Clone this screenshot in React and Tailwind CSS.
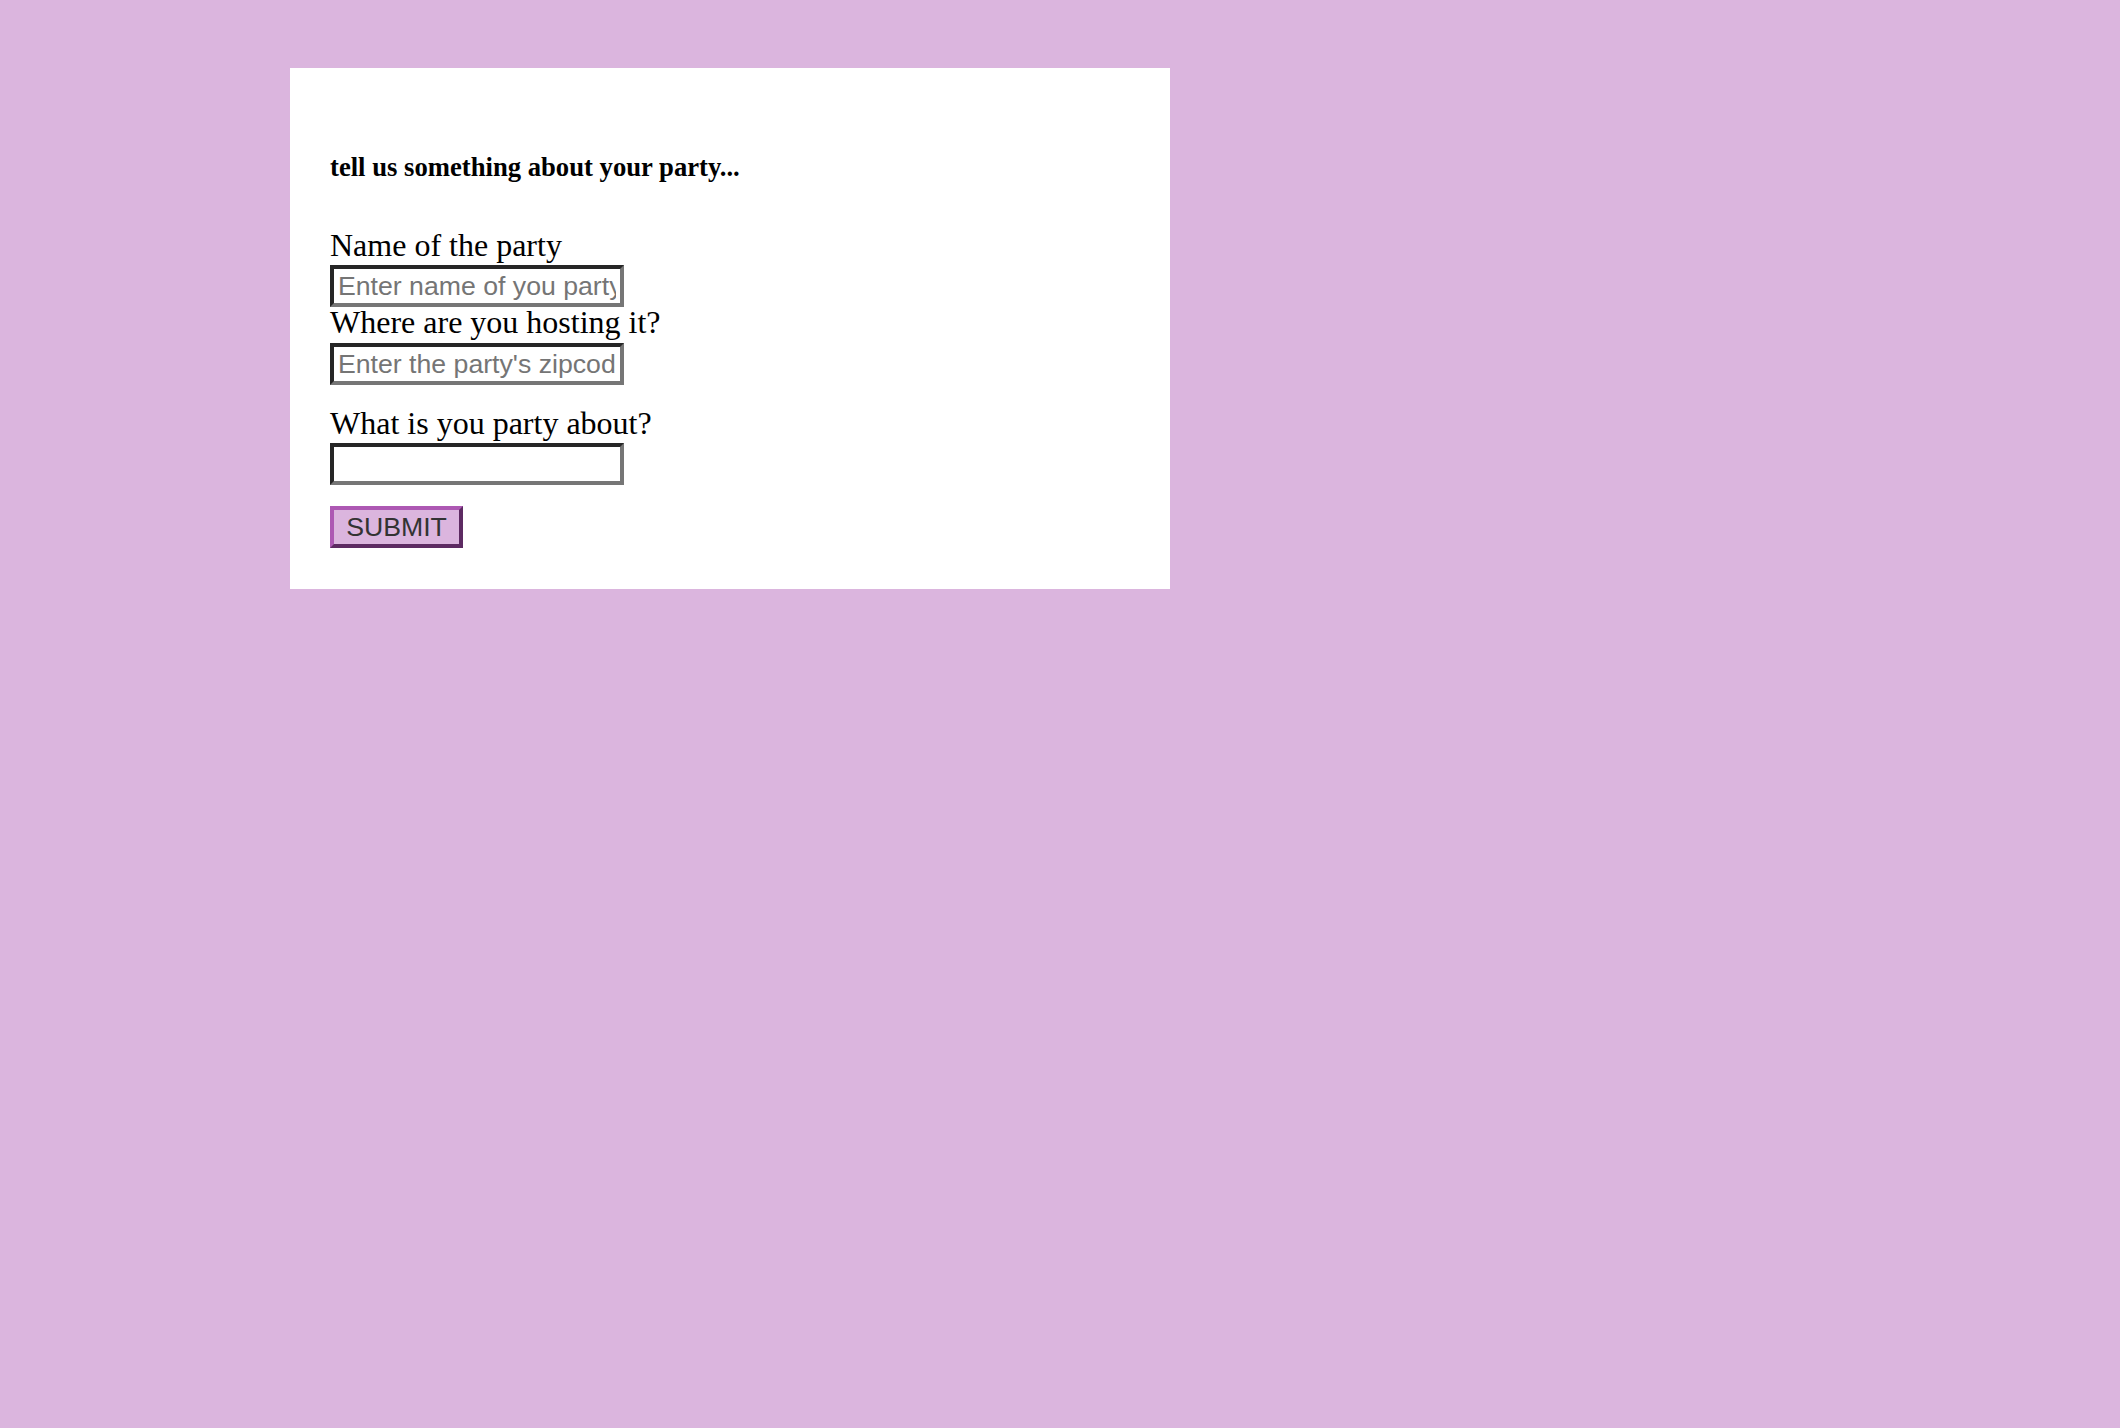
import { useState } from 'react';

const inputClass =
  "block box-border w-[294px] h-[42px] px-[4px] py-[2px] bg-white text-[26.67px] leading-normal text-black placeholder:text-[#757575] border-[4px] border-t-[#262626] border-l-[#262626] border-b-[#767676] border-r-[#767676] outline-none font-['Liberation_Sans',Arial,sans-serif]";

const PartyForm = () => {
  const [name, setName] = useState('');
  const [zip, setZip] = useState('');
  const [about, setAbout] = useState('');

  return (
    <div className="min-h-screen bg-[#dbb5de] pt-[68px] pl-[290px] font-['Liberation_Serif','Times_New_Roman',serif]">
      {/* Form card */}
      <form
        className="w-[880px] bg-white px-[40px] pt-[40px] pb-[41px]"
        onSubmit={(e) => e.preventDefault()}
      >
        <h5 className="mt-[44px] mb-[45px] text-[26.67px] leading-[30px] font-bold text-black">
          tell us something about your party...
        </h5>

        <label className="block text-[32px] leading-[37px] text-black">Name of the party</label>
        <input
          type="text"
          value={name}
          onChange={(e) => setName(e.target.value)}
          placeholder="Enter name of you party"
          className={`${inputClass} mt-[1px]`}
        />

        <label className="block -mt-[3px] text-[32px] leading-[37px] text-black">Where are you hosting it?</label>
        <input
          type="text"
          value={zip}
          onChange={(e) => setZip(e.target.value)}
          placeholder="Enter the party's zipcode"
          className={`${inputClass} mt-[2px]`}
        />

        <label className="block mt-[20px] text-[32px] leading-[37px] text-black">What is you party about?</label>
        <input
          type="text"
          value={about}
          onChange={(e) => setAbout(e.target.value)}
          className={`${inputClass} mt-[1px]`}
        />

        <button
          type="submit"
          className="mt-[21px] box-border flex items-center justify-center w-[133px] h-[42px] px-[12px] bg-[#dbb5de] text-[26.67px] leading-none text-[#333333] border-[4px] border-t-[#ad58b3] border-l-[#ad58b3] border-b-[#5d2a62] border-r-[#5d2a62] font-['Liberation_Sans',Arial,sans-serif]"
        >
          SUBMIT
        </button>
      </form>
    </div>
  );
};

export default PartyForm;
